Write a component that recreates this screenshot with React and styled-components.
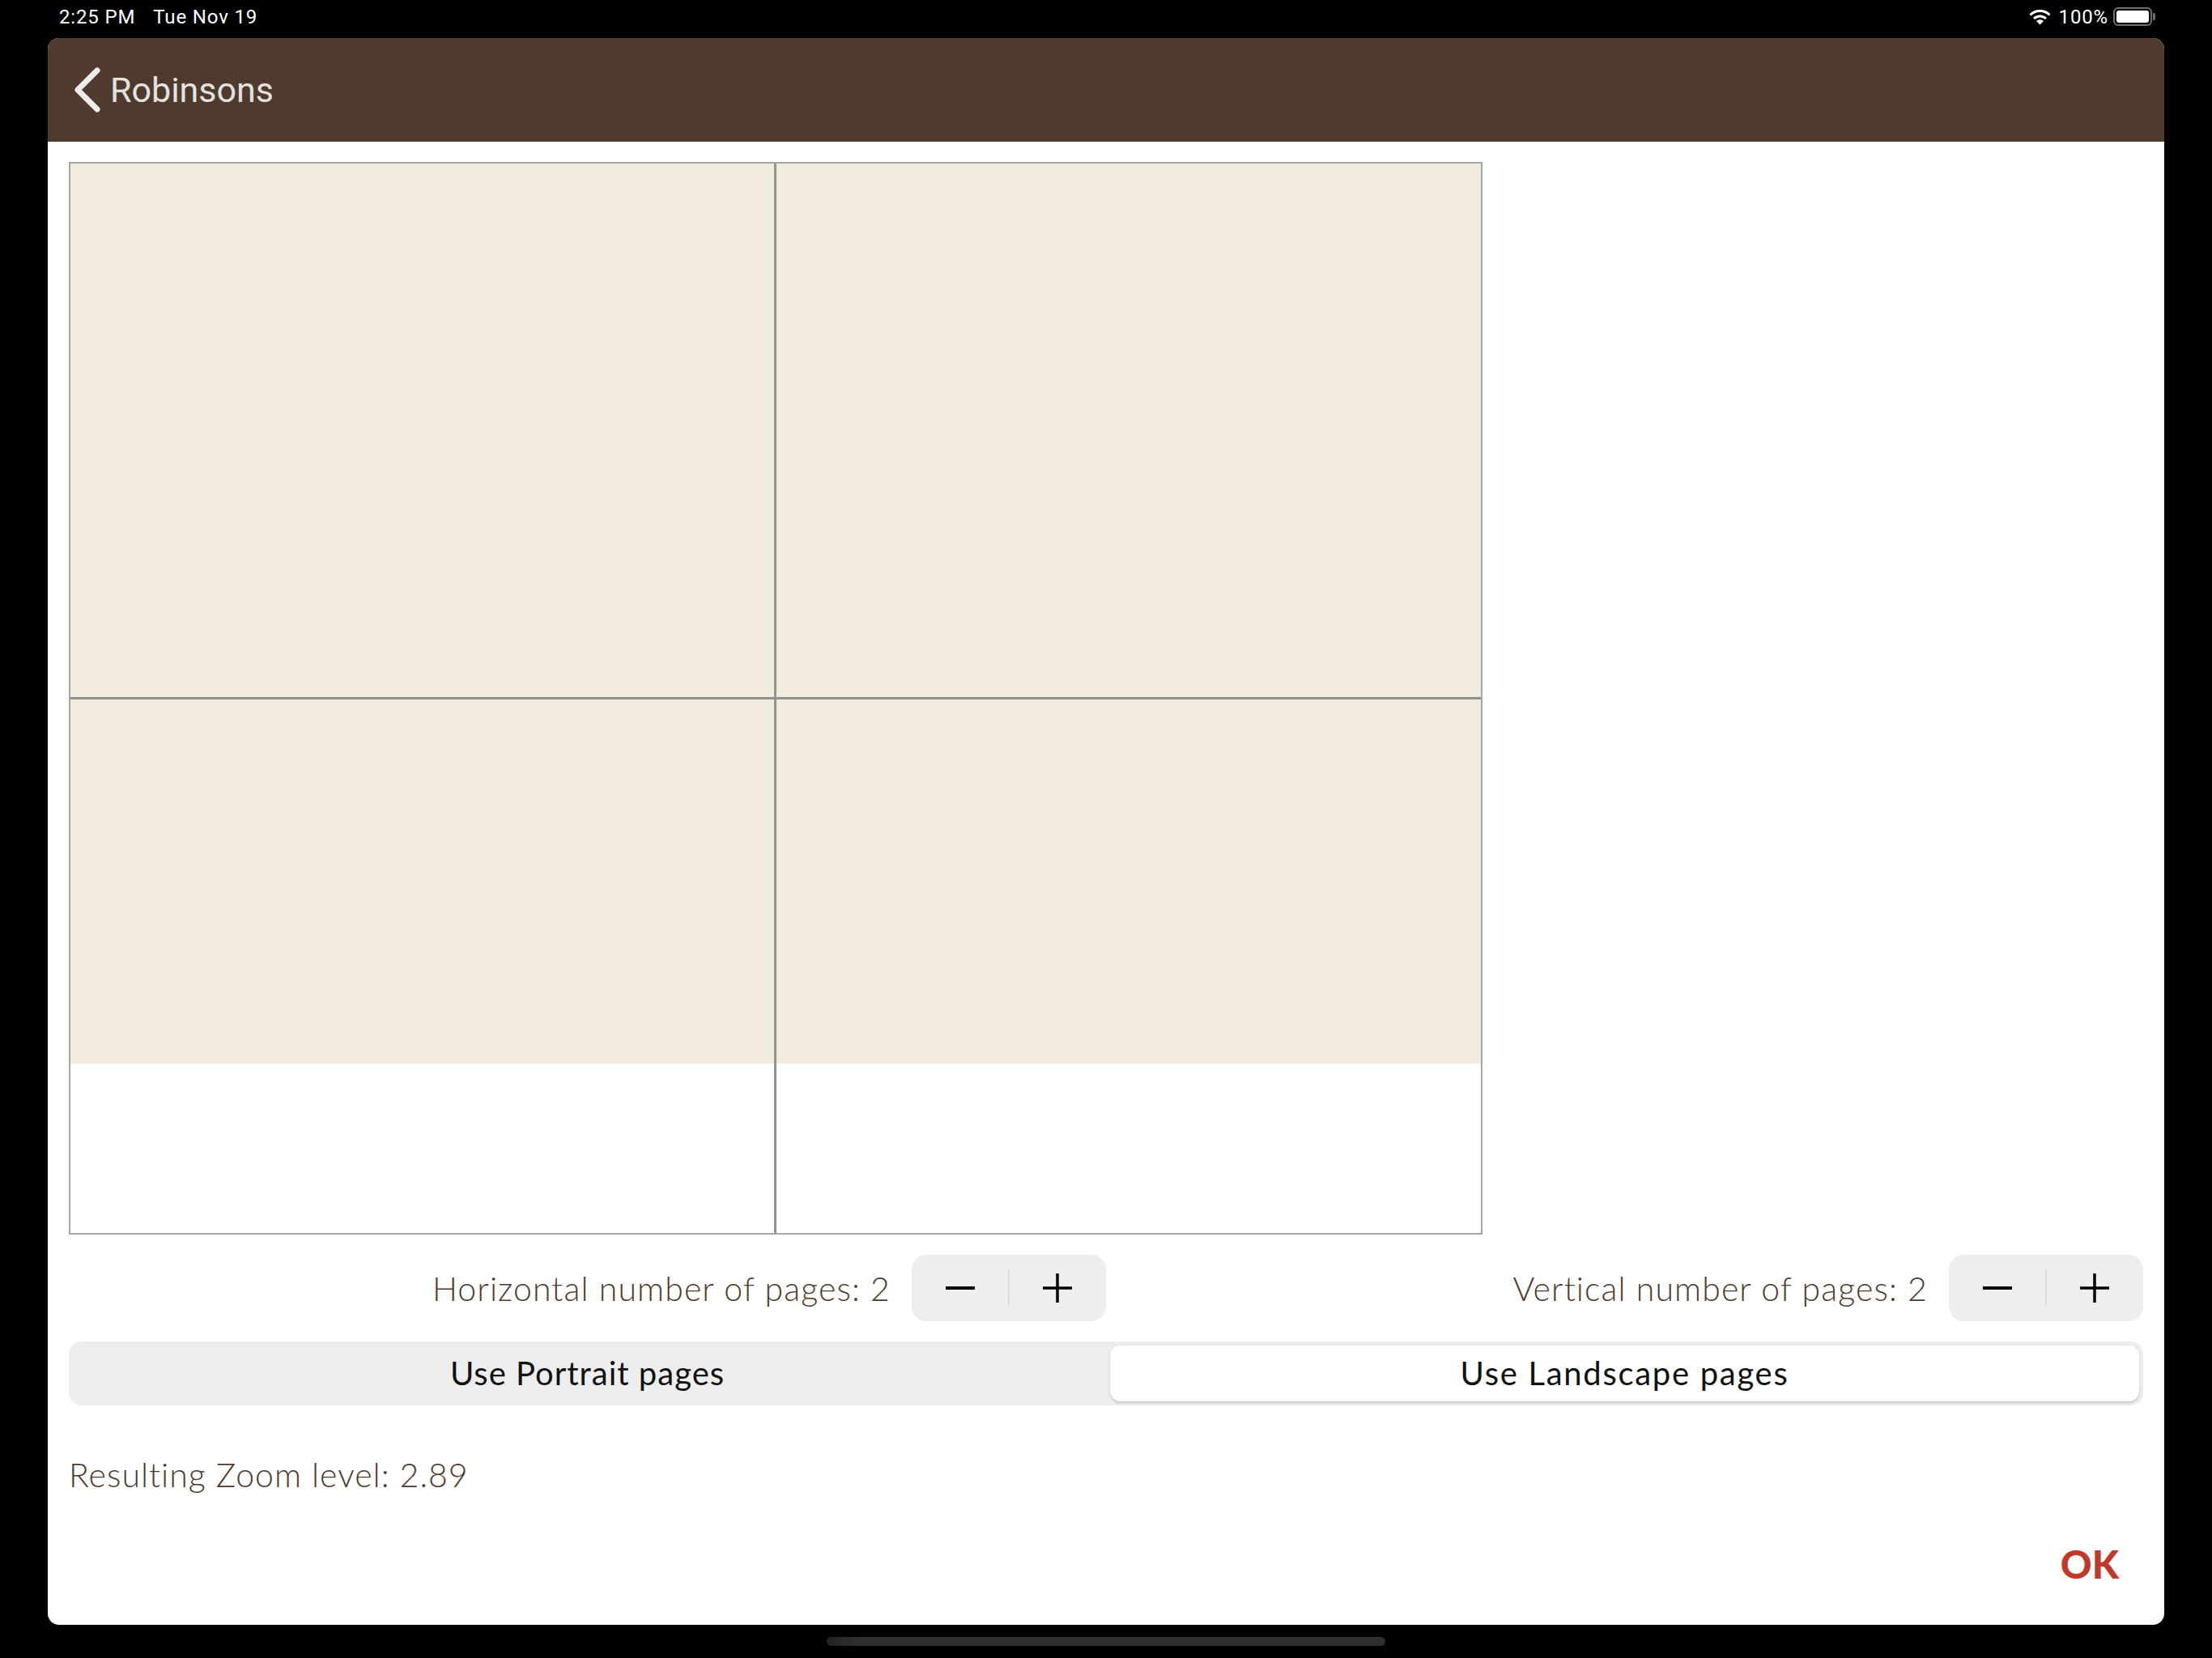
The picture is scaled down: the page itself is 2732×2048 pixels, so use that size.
import React from 'react';
import styled, { createGlobalStyle } from 'styled-components';

const GlobalStyle = createGlobalStyle`
  html, body {
    margin: 0;
    padding: 0;
    background: #000;
  }
`;

const Screen = styled.div`
  width: 2732px;
  height: 2048px;
  display: flex;
  flex-direction: column;
  background: #000;
  overflow: hidden;
`;

const StatusBar = styled.div`
  height: 47px;
  padding: 0 74px 6px 73px;
  box-sizing: border-box;
  display: flex;
  align-items: center;
  justify-content: space-between;
  color: #fff;
  font: 400 24px 'Roboto', sans-serif;
  letter-spacing: 0.85px;
`;

const StatusGroup = styled.div`
  display: flex;
  align-items: center;
  gap: ${(p) => p.$gap}px;
`;

const WifiGlyph = styled.svg`
  margin-right: 4px;
`;

const Battery = styled.div`
  width: 48px;
  height: 23px;
  box-sizing: border-box;
  border: 2px solid #6e6e6e;
  border-radius: 6px;
  padding: 2px;
  position: relative;

  &::before {
    content: '';
    display: block;
    height: 100%;
    background: #fff;
    border-radius: 3px;
  }

  &::after {
    content: '';
    position: absolute;
    right: -6px;
    top: 5px;
    width: 3px;
    height: 9px;
    background: #6e6e6e;
    border-radius: 0 2px 2px 0;
  }
`;

const Panel = styled.div`
  height: 1960px;
  margin: 0 59px;
  display: flex;
  flex-direction: column;
  background: #fff;
  border-radius: 14px;
  overflow: hidden;
`;

const NavBar = styled.div`
  height: 128px;
  flex: none;
  padding-left: 32px;
  display: flex;
  align-items: center;
  gap: 11px;
  background: #4f3a2d;
  color: #e2e2e0;
  font: 400 43px 'Roboto', sans-serif;
`;

const Content = styled.div`
  flex: 1;
  padding: 25px 26px 0;
  display: flex;
  flex-direction: column;
`;

const PageGrid = styled.div`
  width: 1746px;
  height: 1325px;
  display: grid;
  grid-template-columns: 872px 1fr;
  grid-template-rows: 662px 1fr;
  box-sizing: border-box;
  border: 2px solid #a6a6a2;
  background: linear-gradient(#f2ecde, #f2ecde) no-repeat top / 100% 1112px;
`;

const PageCell = styled.div`
  box-sizing: border-box;
  border-right: ${(p) => (p.$col === 0 ? '3px solid #93938e' : 'none')};
  border-bottom: ${(p) => (p.$row === 0 ? '3px solid #93938e' : 'none')};
`;

const ControlRow = styled.div`
  margin-top: 25px;
  display: grid;
  grid-template-columns: 1fr 1fr;
`;

const ControlGroup = styled.div`
  display: flex;
  justify-content: flex-end;
  align-items: center;
  gap: 26px;
`;

const Label = styled.span`
  color: #4f3a2d;
  font: 300 41px 'Lato', sans-serif;
  letter-spacing: 1.1px;
`;

const Stepper = styled.div`
  width: 240px;
  height: 82px;
  display: grid;
  grid-template-columns: 1fr 1fr;
  align-items: center;
  justify-items: center;
  background: #eeeeee;
  border-radius: 18px;
  position: relative;

  &::after {
    content: '';
    position: absolute;
    left: 119px;
    top: 18px;
    width: 2px;
    height: 45px;
    background: #dcdcdc;
  }
`;

const SegmentTrack = styled.div`
  margin-top: 25px;
  height: 79px;
  padding: 5px;
  box-sizing: border-box;
  display: grid;
  grid-template-columns: 1281px 1fr;
  background: #ededed;
  border-radius: 16px;
`;

const Segment = styled.div`
  padding: ${(p) => (p.$active ? '0 0 2px' : '0 10px 2px 0')};
  display: flex;
  align-items: center;
  justify-content: center;
  color: #111;
  font: 400 40px 'Lato', sans-serif;
  letter-spacing: ${(p) => (p.$active ? '1.7px' : '1px')};
  border-radius: 13px;
  background: ${(p) => (p.$active ? '#fff' : 'transparent')};
  box-shadow: ${(p) => (p.$active ? '0 2px 3px rgba(0, 0, 0, 0.16)' : 'none')};
`;

const ZoomLevel = styled(Label)`
  margin-top: 61px;
  letter-spacing: 1px;
`;

const Footer = styled.div`
  margin-top: 57px;
  padding-right: 30px;
  display: flex;
  justify-content: flex-end;
  color: #c0392b;
  font: 900 48px 'Lato', sans-serif;
`;

const HomeBar = styled.div`
  width: 690px;
  height: 11px;
  margin: 15px auto 0;
  background: linear-gradient(90deg, #222 0, #303030 40px);
  border-radius: 6px;
`;

const WifiIcon = () => (
  <WifiGlyph width="27" height="20" viewBox="0 0 27 20" fill="none">
    <path d="M1.5 7.5a17 17 0 0 1 24 0" stroke="#fff" strokeWidth="3" />
    <path d="M6 12a10.6 10.6 0 0 1 15 0" stroke="#fff" strokeWidth="3" />
    <path d="M13.5 19.5 9 15a6.4 6.4 0 0 1 9 0z" fill="#fff" />
  </WifiGlyph>
);

const BackIcon = () => (
  <svg width="34" height="56" viewBox="0 0 34 56" fill="none">
    <path
      d="M29 4 5 28l24 24"
      stroke="#eceeee"
      strokeWidth="7"
      strokeLinecap="round"
      strokeLinejoin="round"
    />
  </svg>
);

const MinusIcon = () => (
  <svg width="38" height="38" viewBox="0 0 38 38">
    <path d="M1 19h36" stroke="#000" strokeWidth="4" />
  </svg>
);

const PlusIcon = () => (
  <svg width="38" height="38" viewBox="0 0 38 38">
    <path d="M1 19h36M19 1v36" stroke="#000" strokeWidth="3.5" />
  </svg>
);

const PageStepper = ({ label, value }) => (
  <ControlGroup>
    <Label>{`${label}: ${value}`}</Label>
    <Stepper>
      <MinusIcon />
      <PlusIcon />
    </Stepper>
  </ControlGroup>
);

const App = () => (
  <Screen>
    <GlobalStyle />
    <StatusBar>
      <StatusGroup $gap={22}>
        <span>2:25 PM</span>
        <span>Tue Nov 19</span>
      </StatusGroup>
      <StatusGroup $gap={6}>
        <WifiIcon />
        <span>100%</span>
        <Battery />
      </StatusGroup>
    </StatusBar>
    <Panel>
      <NavBar>
        <BackIcon />
        Robinsons
      </NavBar>
      <Content>
        <PageGrid>
          <PageCell $row={0} $col={0} />
          <PageCell $row={0} $col={1} />
          <PageCell $row={1} $col={0} />
          <PageCell $row={1} $col={1} />
        </PageGrid>
        <ControlRow>
          <PageStepper label="Horizontal number of pages" value={2} />
          <PageStepper label="Vertical number of pages" value={2} />
        </ControlRow>
        <SegmentTrack>
          <Segment>Use Portrait pages</Segment>
          <Segment $active>Use Landscape pages</Segment>
        </SegmentTrack>
        <ZoomLevel>Resulting Zoom level: 2.89</ZoomLevel>
        <Footer>OK</Footer>
      </Content>
    </Panel>
    <HomeBar />
  </Screen>
);

export default App;
